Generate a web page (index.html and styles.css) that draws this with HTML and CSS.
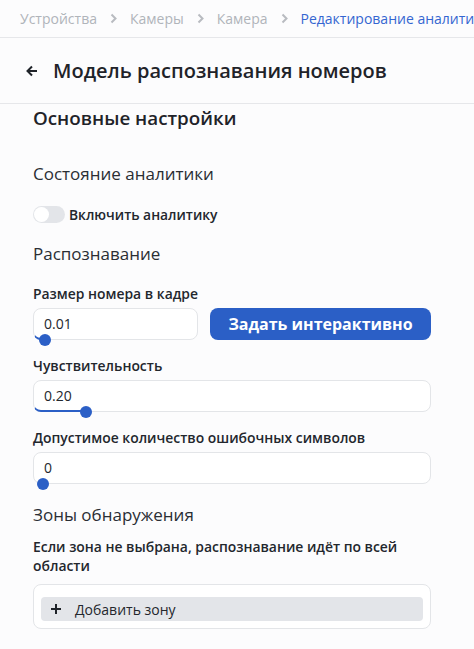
FILE: index.html
```html
<!DOCTYPE html>
<html lang="ru">
<head>
<meta charset="utf-8">
<title>Модель распознавания номеров</title>
<link rel="stylesheet" href="styles.css">
</head>
<body>
<nav class="crumbs">
  <span class="crumb">Устройства</span>
  <svg class="chev" width="7" height="11" viewBox="0 0 7 11"><path d="M1.5 1.5 L5.5 5.5 L1.5 9.5" fill="none" stroke="#b8bbc0" stroke-width="2"/></svg>
  <span class="crumb">Камеры</span>
  <svg class="chev" width="7" height="11" viewBox="0 0 7 11"><path d="M1.5 1.5 L5.5 5.5 L1.5 9.5" fill="none" stroke="#b8bbc0" stroke-width="2"/></svg>
  <span class="crumb">Камера</span>
  <svg class="chev" width="7" height="11" viewBox="0 0 7 11"><path d="M1.5 1.5 L5.5 5.5 L1.5 9.5" fill="none" stroke="#b8bbc0" stroke-width="2"/></svg>
  <span class="crumb active">Редактирование аналитики</span>
</nav>
<header class="head">
  <svg class="back" width="12" height="12" viewBox="0 0 12 12"><path d="M11 6 H1.5 M6 1.5 L1.5 6 L6 10.5" fill="none" stroke="#1f2329" stroke-width="2"/></svg>
  <h1 class="title">Модель распознавания номеров</h1>
</header>
<main class="content">
  <h2 class="h2">Основные настройки</h2>
  <h3 class="sect first">Состояние аналитики</h3>
  <div class="toggle-row">
    <span class="toggle"><span class="knob"></span></span>
    <span class="toggle-label">Включить аналитику</span>
  </div>
  <h3 class="sect">Распознавание</h3>

  <div class="field f1">
    <div class="label">Размер номера в кадре</div>
    <div class="row">
      <div class="input small">
        <span class="val">0.01</span>
        <span class="track" style="width:10px"></span>
        <span class="dot" style="left:11px"></span>
      </div>
      <button class="btn">Задать интерактивно</button>
    </div>
  </div>

  <div class="field">
    <div class="label">Чувствительность</div>
    <div class="input">
      <span class="val">0.20</span>
      <span class="track" style="width:52px"></span>
      <span class="dot" style="left:52px"></span>
    </div>
  </div>

  <div class="field">
    <div class="label">Допустимое количество ошибочных символов</div>
    <div class="input">
      <span class="val">0</span>
      <span class="dot" style="left:9px"></span>
    </div>
  </div>

  <h3 class="sect zones">Зоны обнаружения</h3>
  <p class="help">Если зона не выбрана, распознавание идёт по всей области</p>
  <div class="zonebox">
    <div class="addzone">
      <svg width="10" height="10" viewBox="0 0 10 10"><path d="M5 0 V10 M0 5 H10" stroke="#1f2329" stroke-width="2"/></svg>
      <span>Добавить зону</span>
    </div>
  </div>
</main>
</body>
</html>
```
FILE: styles.css
```css
* { box-sizing: border-box; }
html, body { margin: 0; padding: 0; }
body {
  background: #fcfcfd;
  font-family: "Open Sans", "Noto Sans", sans-serif;
  color: #23272d;
  width: 474px;
  overflow: hidden;
}
.crumbs {
  height: 38px;
  border-bottom: 1px solid #e6e7ea;
  display: flex;
  align-items: center;
  gap: 13px;
  padding-left: 20px;
  white-space: nowrap;
  overflow: hidden;
  font-size: 14px;
}
.crumb { color: #b0b4ba; flex: none; }
.crumb.active { color: #3466d1; }
.chev { flex: none; }
.head {
  height: 66px;
  border-bottom: 1px solid #e6e7ea;
  display: flex;
  align-items: center;
  padding-left: 26px;
  gap: 15px;
}
.back { flex: none; }
.title {
  margin: 0;
  font-size: 20px;
  font-weight: 600;
  color: #1f2329;
}
.content {
  padding: 0 43px 20px 33px;
}
.h2 {
  margin: 2px 0 0;
  font-size: 18.8px;
  line-height: 24px;
  font-weight: 600;
  color: #1f2329;
}
.sect {
  margin: 16px 0 0;
  font-size: 17px;
  line-height: 24px;
  font-weight: 400;
  color: #2a2e34;
}
.sect.first { margin-top: 32px; }
.toggle-row {
  margin-top: 16px;
  height: 24px;
  display: flex;
  align-items: center;
  gap: 4px;
}
.toggle {
  width: 32px;
  height: 17px;
  border-radius: 9px;
  background: #e3e5e9;
  display: flex;
  align-items: center;
  padding-left: 1px;
}
.knob {
  width: 15px;
  height: 15px;
  border-radius: 50%;
  background: #fff;
}
.toggle-label {
  font-size: 13.8px;
  font-weight: 600;
}
.field { margin-top: 16px; }
.field.f1 { margin-top: 18px; }
.label {
  font-size: 13.9px;
  line-height: 20px;
  font-weight: 600;
  color: #23272d;
  margin-bottom: 4px;
}
.row {
  display: flex;
  gap: 12px;
}
.input {
  position: relative;
  height: 32px;
  border: 1px solid #e3e5e8;
  border-radius: 8px;
  background: #fff;
  display: flex;
  align-items: center;
  padding-left: 10px;
  font-size: 14px;
  color: #23272d;
}
.input.small { width: 165px; flex: none; }
.val { margin-top: -2px; }
.track {
  position: absolute;
  left: -1px;
  bottom: -1px;
  height: 10px;
  border-bottom: 2px solid #2b5fc6;
  border-left: 1px solid transparent;
  border-bottom-left-radius: 8px;
}
.dot {
  position: absolute;
  bottom: -7px;
  width: 12px;
  height: 12px;
  margin-left: -6px;
  border-radius: 50%;
  background: #2b5fc6;
}
.btn {
  flex: 1;
  height: 32px;
  border: 0;
  border-radius: 8px;
  background: #2b5fc6;
  color: #fff;
  font-family: inherit;
  font-size: 16px;
  font-weight: 700;
  padding: 0;
}
.sect.zones { margin-top: 19px; }
.help {
  margin: 10px 0 0;
  font-size: 13.9px;
  line-height: 19px;
  font-weight: 600;
}
.zonebox {
  margin-top: 9px;
  border: 1px solid #e3e5e8;
  border-radius: 8px;
  background: #fff;
  padding: 12px 7px 7px;
}
.addzone {
  height: 24px;
  background: #e3e5e9;
  border-radius: 4px;
  display: flex;
  align-items: center;
  gap: 14px;
  padding-left: 10px;
  font-size: 14px;
  color: #23272d;
}
```
